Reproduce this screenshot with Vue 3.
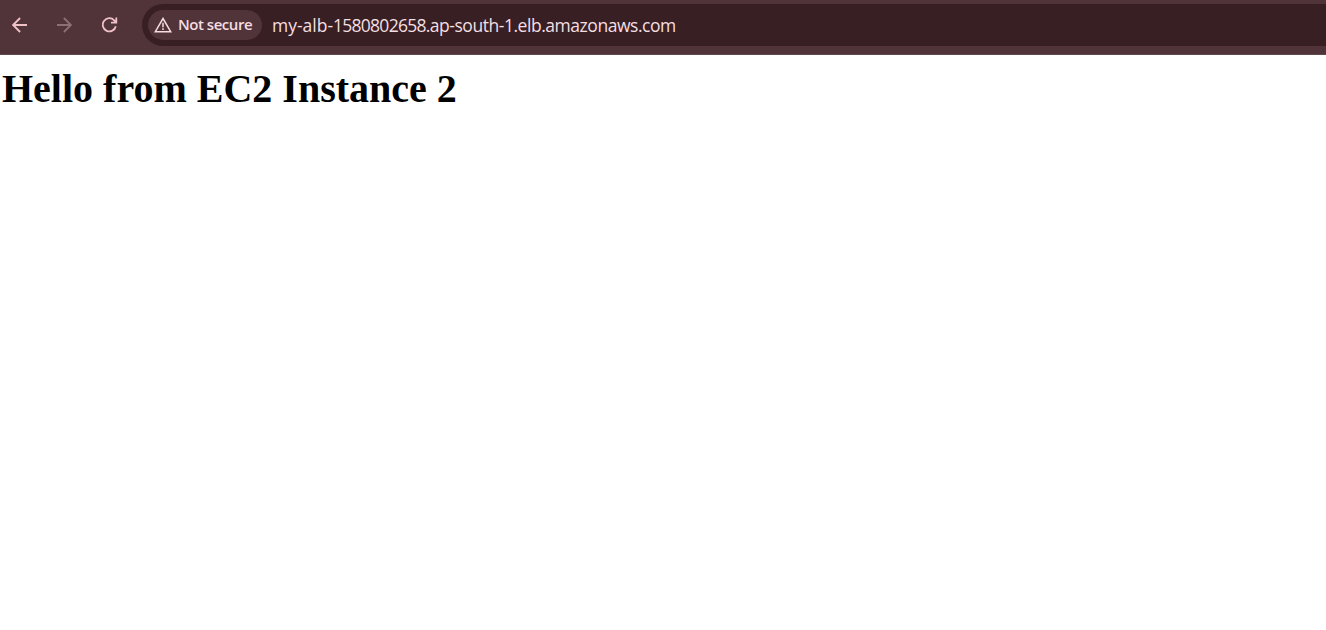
<script setup>
const status = 'Not secure'
const address = {
  name: 'my-alb-',
  id: '1580802658',
  domain: '.ap-south-1.elb.amazonaws.com',
}
</script>

<template>
  <div class="browser">
    <header class="toolbar">
      <nav class="controls">
        <button class="control" aria-label="Back">
          <svg width="16" height="16" viewBox="0 0 16 16">
            <path d="M15 8H1.2M8.1 1L1.1 8l7 7" />
          </svg>
        </button>
        <button class="control disabled" aria-label="Forward">
          <svg width="16" height="16" viewBox="0 0 16 16">
            <path d="M0 8h13.8M6.9 1l7 7-7 7" />
          </svg>
        </button>
        <button class="control" aria-label="Reload">
          <svg width="16" height="16" viewBox="0 0 16 16">
            <path d="M13.8 9.2A6.6 6.6 0 1 1 12.2 3.3L14.2 5.6M14.3 .5V5.6H9" />
          </svg>
        </button>
      </nav>
      <div class="omnibox">
        <div class="chip">
          <svg class="warning" width="18" height="16" viewBox="0 0 18 16">
            <path d="M9 1.5L16.7 14.7H1.3zM9 5.8v4.4M9 11.3v1.7" />
          </svg>
          <span class="status">{{ status }}</span>
        </div>
        <span class="address"><span class="name">{{ address.name }}</span><span class="id">{{ address.id }}</span><span>{{ address.domain }}</span></span>
      </div>
    </header>
    <main class="page">
      <h1>Hello from EC2 Instance 2</h1>
    </main>
  </div>
</template>

<style>
body {
  background: #fff;
}
</style>

<style scoped>
.browser {
  height: 630px;
  overflow: hidden;
  background: #fff;
}
.toolbar {
  box-sizing: border-box;
  height: 55px;
  padding-top: 4px;
  display: flex;
  align-items: flex-start;
  background: #503439;
  border-bottom: 1px solid #61484c;
}
.controls {
  display: flex;
  gap: 29px;
  width: 142px;
  height: 42px;
  box-sizing: border-box;
  padding-left: 12px;
  align-items: center;
  flex: none;
}
.control {
  width: 16px;
  height: 16px;
  padding: 0;
  border: 0;
  background: none;
  color: #f0c0c7;
}
.control svg {
  display: block;
}
.control path {
  fill: none;
  stroke: currentColor;
  stroke-width: 1.8;
}
.control.disabled {
  color: #8e6f75;
}
.omnibox {
  flex: 1;
  height: 42px;
  box-sizing: border-box;
  padding-left: 6px;
  display: flex;
  align-items: center;
  background: #381f23;
  border-radius: 21px 0 0 21px;
  font-family: "Open Sans", "Noto Sans", sans-serif;
  white-space: nowrap;
}
.chip {
  width: 114px;
  height: 30px;
  box-sizing: border-box;
  padding-left: 6px;
  display: flex;
  align-items: center;
  border-radius: 15px;
  background: #503439;
  color: #f5dde1;
}
.warning path {
  fill: none;
  stroke: currentColor;
  stroke-width: 1.5;
}
.status {
  margin-left: 6px;
  padding-bottom: 2px;
  font-size: 15px;
  font-weight: 600;
  line-height: 20px;
  letter-spacing: -0.47px;
}
.address {
  margin-left: 10px;
  color: #f3dfe2;
  font-size: 17.5px;
  line-height: 24px;
  letter-spacing: -0.46px;
}
.name {
  letter-spacing: 0;
}
.id {
  letter-spacing: -0.75px;
}
.page {
  padding: 11px 0 0 2px;
}
h1 {
  margin: 0;
  color: #000;
  font: bold 40px/46px "Liberation Serif", "Times New Roman", serif;
}
</style>
